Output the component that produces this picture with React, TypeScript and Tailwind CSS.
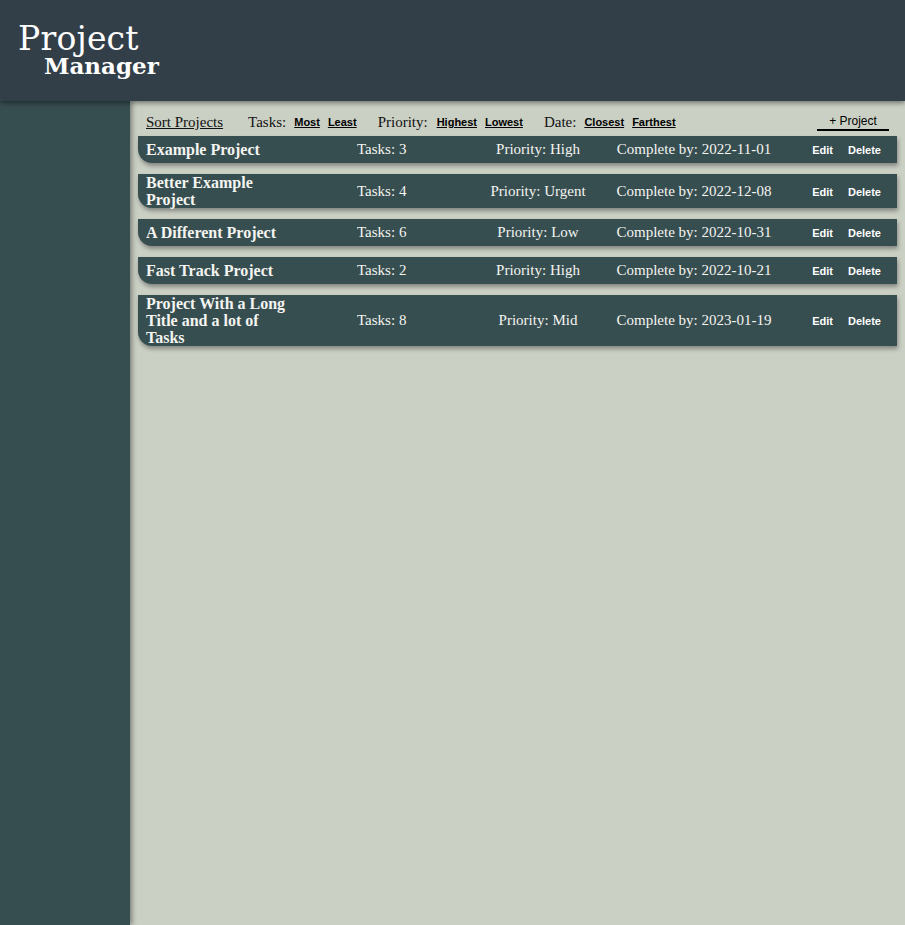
import React from "react";

const projects = [
  { title: "Example Project", tasks: 3, priority: "High", date: "2022-11-01" },
  { title: "Better Example Project", tasks: 4, priority: "Urgent", date: "2022-12-08" },
  { title: "A Different Project", tasks: 6, priority: "Low", date: "2022-10-31" },
  { title: "Fast Track Project", tasks: 2, priority: "High", date: "2022-10-21" },
  { title: "Project With a Long Title and a lot of Tasks", tasks: 8, priority: "Mid", date: "2023-01-19" },
];

const serif = "font-['Liberation_Serif','Times_New_Roman',serif]";
const sans = "font-['Liberation_Sans',Arial,sans-serif]";

function SortLink({ children }: { children: React.ReactNode }) {
  return (
    <button className={`${sans} text-[11px] font-bold underline text-black leading-none`}>{children}</button>
  );
}

export default function App() {
  return (
    <div className="min-h-screen flex flex-col bg-[#cbd0c5]">
      <header className="relative z-20 h-[101px] bg-[#333f48] shadow-[0_2px_5px_rgba(0,0,0,0.45)] pl-[18px] pt-[24px] text-white font-['DejaVu_Serif',serif]">
        <div className="text-[33px] leading-[30px] tracking-[0.2px]">Project</div>
        <div className="text-[23px] leading-[24px] font-bold pl-[26px]">Manager</div>
      </header>
      <div className="flex flex-1">
        <aside className="relative z-10 w-[130px] shrink-0 bg-[#374e50] shadow-[2px_0_5px_rgba(0,0,0,0.4)]" />
        <main className="flex-1 px-2 pt-[8px]">
          <div className={`h-[27px] flex items-center pl-2 pr-2 ${serif} text-[15px] text-[#111]`}>
            <span className="underline mr-[25px]">Sort Projects</span>
            <span>Tasks:</span>
            <div className="flex items-center gap-[8px] ml-[8px] mr-[21px]">
              <SortLink>Most</SortLink>
              <SortLink>Least</SortLink>
            </div>
            <span>Priority:</span>
            <div className="flex items-center gap-[8px] ml-[9px] mr-[21px]">
              <SortLink>Highest</SortLink>
              <SortLink>Lowest</SortLink>
            </div>
            <span>Date:</span>
            <div className="flex items-center gap-[8px] ml-[8px]">
              <SortLink>Closest</SortLink>
              <SortLink>Farthest</SortLink>
            </div>
            <button className={`ml-auto w-[72px] ${sans} text-[12px] text-black border-b-2 border-black leading-[15px] pt-[1px] mb-[2px]`}>
              + Project
            </button>
          </div>
          <div className="flex flex-col gap-[11px]">
            {projects.map((p) => (
              <div
                key={p.title}
                className="flex items-center min-h-[27px] pl-2 pr-2 bg-[#374e50] rounded-bl-[14px] shadow-[1px_3px_4px_rgba(0,0,0,0.35)] text-[#f4f4f0]"
              >
                <div className="w-[211px] shrink-0">
                  <div className={`${serif} font-bold text-[16px] leading-[17px] max-w-[150px]`}>{p.title}</div>
                </div>
                <div className={`w-[100px] shrink-0 ${serif} text-[15px] leading-[17px] whitespace-nowrap`}>Tasks: {p.tasks}</div>
                <div className={`w-[162px] shrink-0 text-center ${serif} text-[15px] leading-[17px] whitespace-nowrap`}>Priority: {p.priority}</div>
                <div className={`w-[150px] shrink-0 flex justify-center ${serif} text-[15px] leading-[17px] whitespace-nowrap`}>
                  <span>Complete by: {p.date}</span>
                </div>
                <div className="flex-1 flex justify-end">
                  <button className={`${sans} font-bold text-[11px] text-white pl-2 pr-[7px] py-[5px] translate-y-[1px]`}>Edit</button>
                  <button className={`${sans} font-bold text-[11px] text-white px-2 py-[5px] translate-y-[1px]`}>Delete</button>
                </div>
              </div>
            ))}
          </div>
        </main>
      </div>
    </div>
  );
}
